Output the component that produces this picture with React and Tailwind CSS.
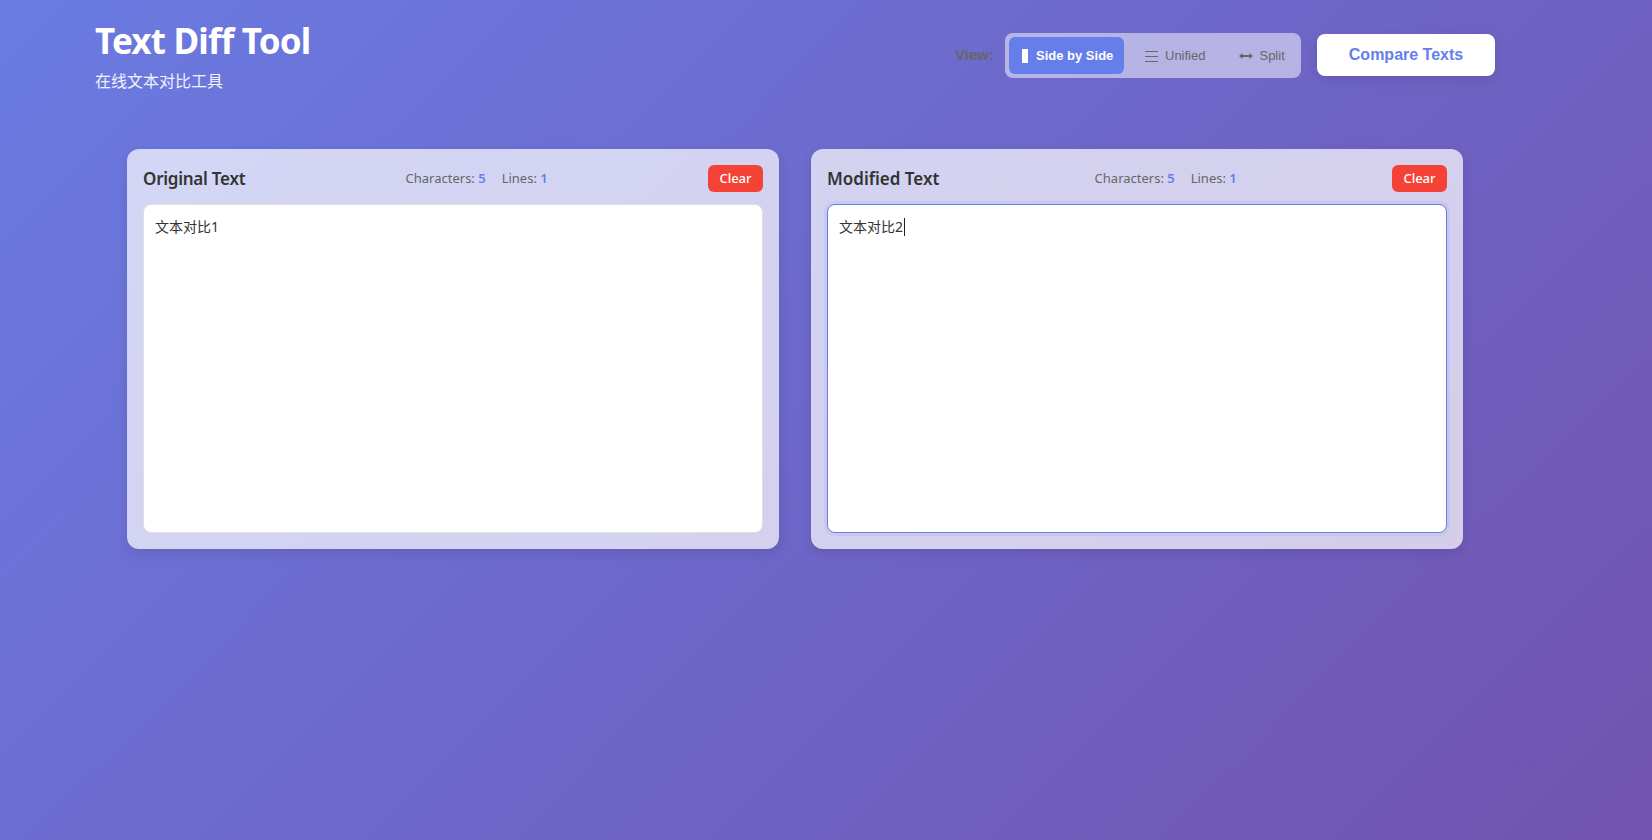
import React from "react";

const sans = 'font-["Noto_Sans","Noto_Sans_CJK_SC",sans-serif]';

function Panel({ title, text, focused, titleClass }) {
  return (
    <section className="flex h-[400px] w-[652px] flex-col rounded-xl bg-white/70 p-4 shadow-[0_4px_12px_rgba(0,0,0,0.1)]">
      <div className="mb-3 flex h-[27px] items-center justify-between">
        <h2 className={`text-[17px] leading-[27px] font-semibold text-[#333] ${titleClass}`}>{title}</h2>
        <div className="flex gap-4 text-[13px] leading-[27px] text-[#666]">
          <span>Characters: <b className="font-semibold text-[#667eea]">5</b></span>
          <span>Lines: <b className="font-semibold text-[#667eea]">1</b></span>
        </div>
        <button className="h-[27px] w-[55px] rounded-md bg-[#f44336] text-[13px] font-medium text-white">Clear</button>
      </div>
      <div className={`relative flex-1 rounded-lg bg-white px-[11px] py-[11px] text-[14px] leading-[21px] text-[#333] ${focused ? "border border-[#667eea] shadow-[0_0_0_3px_rgba(102,126,234,0.1)]" : "border border-[#e0e0e0]"}`}>
        <span>{text}</span>
        {focused && <span className="absolute top-[13px] left-[76px] h-[18px] w-px bg-[#222]" />}
      </div>
    </section>
  );
}

export default function App() {
  return (
    <div className={`min-h-[840px] bg-[linear-gradient(135deg,#6a7be2_0%,#7153b0_100%)] ${sans}`}>
      <header className="flex h-[109px] items-start justify-between pr-[157px] pl-[95px]">
        <div className="pt-[18px]">
          <h1 className="text-[35px] leading-[46px] font-bold tracking-[-0.8px] text-white">Text Diff Tool</h1>
          <p className="mt-[5px] text-[16px] leading-[24px] text-white/90">在线文本对比工具</p>
        </div>
        <div className="flex items-center pt-[33px] font-['Liberation_Sans',sans-serif]">
          <span className="mr-[11px] text-[15px] font-bold text-[#666]">View:</span>
          <div className="mr-4 flex h-[45px] w-[296px] items-center rounded-lg bg-white/50 p-1 text-[13px] text-[#666]">
            <button className="flex h-[37px] w-[115px] items-center rounded-md bg-[#667eea] pl-[13px] font-bold text-white">
              <span className="mr-[8px] h-[14px] w-[6px] bg-white" />
              Side by Side
            </button>
            <button className="ml-[21px] flex items-center">
              <svg width="13" height="12" viewBox="0 0 13 12" className="mr-[7px]" stroke="#666" strokeWidth="1">
                <path d="M0 1.5h13M0 6.5h13M0 11.5h13" />
              </svg>
              Unified
            </button>
            <button className="ml-[34px] flex items-center">
              <svg width="14" height="8" viewBox="0 0 14 8" className="mr-[6px]" fill="#666">
                <path d="M0 4 3.5 1v2h7V1L14 4l-3.500 3V5h-7v2z" />
              </svg>
              Split
            </button>
          </div>
          <button className="-mt-px h-[42px] w-[178px] rounded-lg bg-white text-[16px] font-bold text-[#667eea] shadow-[0_4px_12px_rgba(0,0,0,0.1)]">Compare Texts</button>
        </div>
      </header>
      <main className="mt-10 flex gap-8 pl-[127px]">
        <Panel title="Original Text" text="文本对比1" titleClass="tracking-[-0.25px]" />
        <Panel title="Modified Text" text="文本对比2" focused titleClass="tracking-normal" />
      </main>
    </div>
  );
}
